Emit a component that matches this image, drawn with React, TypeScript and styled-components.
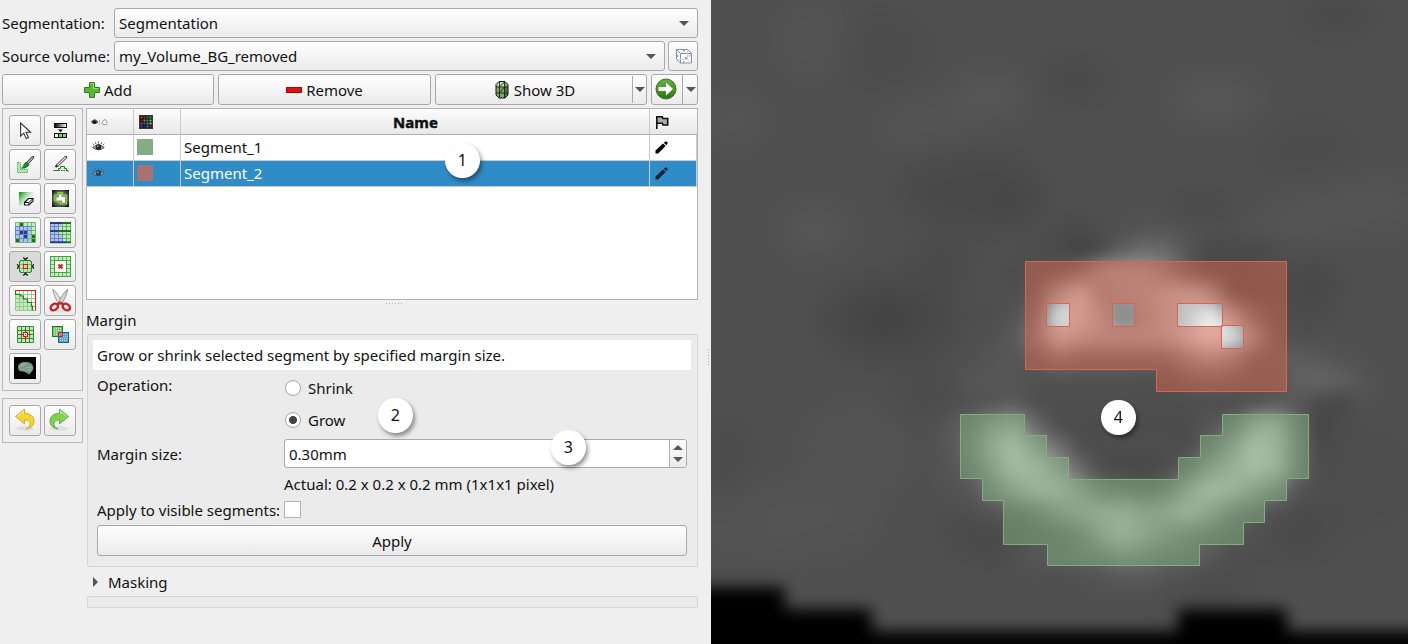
import React from 'react';
import styled, { createGlobalStyle, css } from 'styled-components';

const GlobalStyle = createGlobalStyle`
  * { box-sizing: border-box; }
  body {
    margin: 0;
    background: #efefef;
    color: #111;
    font-family: "Noto Sans", "Open Sans", sans-serif;
    font-size: 15px;
    line-height: 20px;
    overflow: hidden;
  }
`;

const raised = css`
  border: 1px solid #a9a9a9;
  border-radius: 3px;
  background: linear-gradient(#fefefe, #ebebeb);
`;

const Window = styled.div`
  position: relative;
  display: flex;
  width: 1408px;
  height: 644px;
  overflow: hidden;
`;

const Panel = styled.div`
  display: flex;
  flex-direction: column;
  gap: 3px;
  width: 711px;
  flex: none;
  padding: 8px 13px 0 2px;
`;

const FieldRow = styled.div`
  display: flex;
  align-items: center;
  height: 30px;
`;

const FieldLabel = styled.label`
  width: 112px;
  flex: none;
  white-space: nowrap;
  letter-spacing: -0.03px;
`;

const Combo = styled.div`
  ${raised}
  display: flex;
  flex: 1;
  align-items: center;
  justify-content: space-between;
  height: 30px;
  padding: 0 8px 0 4px;
`;

const Arrow = styled.i<{ $up?: boolean }>`
  width: 0;
  height: 0;
  border: 5px solid transparent;
  border-${p => (p.$up ? 'top' : 'bottom')}: 0;
  border-${p => (p.$up ? 'bottom' : 'top')}-color: #555;
`;

const GeometryButton = styled.button`
  ${raised}
  width: 30px;
  height: 30px;
  margin-left: 3px;
  padding: 0;
  display: flex;
`;

const ActionRow = styled.div`
  display: flex;
  gap: 4px;
  height: 31px;
`;

const Button = styled.button<{ $width?: number }>`
  ${raised}
  display: flex;
  align-items: center;
  justify-content: center;
  gap: 4px;
  width: ${p => (p.$width ? `${p.$width}px` : '100%')};
  height: 31px;
  padding: 1px 0 0;
  color: inherit;
  font: inherit;
`;

const SplitButton = styled.div<{ $width: number }>`
  ${raised}
  display: flex;
  width: ${p => p.$width}px;
`;

const SplitMain = styled.div<{ $iconOnly?: boolean }>`
  display: flex;
  flex: 1;
  align-items: center;
  justify-content: center;
  gap: 5px;
  padding: ${p => (p.$iconOnly ? '0 2px 2px 0' : '1px 0 0 2px')};
`;

const SplitDrop = styled.div<{ $joined?: boolean }>`
  display: flex;
  align-items: center;
  justify-content: center;
  width: ${p => (p.$joined ? 15 : 14)}px;
  padding-left: ${p => (p.$joined ? 1 : 0)}px;
  margin: ${p => (p.$joined ? '0' : '1px 0')};
  border-left: 1px solid #a9a9a9;
`;

const Editor = styled.div`
  display: flex;
  gap: 3px;
`;

const Tools = styled.div`
  display: flex;
  flex-direction: column;
  gap: 7px;
  width: 81px;
`;

const ToolBox = styled.div`
  display: grid;
  grid-template-columns: 32px 32px;
  gap: 3px;
  padding: 6px;
  border: 1px solid #b9b9b9;
`;

const ToolButton = styled.button<{ $active?: boolean }>`
  ${raised}
  ${p => p.$active && 'background: #dadada;'}
  width: 32px;
  height: 31px;
  padding: 0;
  display: flex;
`;

const Main = styled.div`
  width: 612px;
  padding: 0;
`;

const Table = styled.div`
  height: 192px;
  border: 1px solid #b5b5b5;
  background: #fff;
`;

const TableRow = styled.div<{ $selected?: boolean; $header?: boolean }>`
  display: grid;
  grid-template-columns: 47px 47px 469px 47px;
  height: 26px;
  color: ${p => (p.$selected ? '#fff' : 'inherit')};
  background: ${p =>
    p.$header ? 'linear-gradient(#fcfcfc, #e8e8e8)' : p.$selected ? '#308cc6' : '#fff'};
  font-weight: ${p => (p.$header ? 700 : 400)};
  ${p => p.$header && '-webkit-text-stroke: 0.4px #000;'}
`;

const Cell = styled.div<{ $center?: boolean; $header?: boolean; $inset?: number }>`
  display: flex;
  align-items: center;
  justify-content: ${p => (p.$center ? 'center' : 'flex-start')};
  padding-left: ${p => p.$inset ?? 3}px;
  padding-top: ${p => (p.$header ? 1 : 0)}px;
  padding-bottom: ${p => (p.$header ? 0 : 1)}px;
  border-right: 1px solid #cacaca;
  border-bottom: 1px solid ${p => (p.$header ? '#b0b0b0' : '#cacaca')};
  ${p => p.$header && '&:last-child { border-right: 0; }'}
`;

const Swatch = styled.span<{ $color: string }>`
  width: 16px;
  height: 16px;
  background: ${p => p.$color};
`;

const Splitter = styled.div`
  display: flex;
  justify-content: center;
  gap: 2px;
  height: 10px;
  padding: 3px 0 0 4px;
`;

const Dot = styled.i`
  width: 1px;
  height: 1px;
  background: #aaa;
`;

const SectionTitle = styled.div`
  height: 24px;
`;

const Group = styled.div`
  margin-left: 1px;
  height: 233px;
  padding: 5px 6px 5px 5px;
  border: 1px solid #d5d5d5;
  border-radius: 2px;
  background: #ebebeb;
`;

const Help = styled.div`
  height: 30px;
  padding: 5px 4px;
  background: #fff;
  letter-spacing: -0.01px;
`;

const Form = styled.div`
  padding: 0 4px;
`;

const FormRow = styled.div<{ $height: number; $top?: boolean; $lift?: number }>`
  display: flex;
  align-items: ${p => (p.$top ? 'flex-start' : 'center')};
  height: ${p => p.$height}px;
  padding-bottom: ${p => p.$lift ?? 0}px;
`;

const FormLabel = styled.label<{ $offset?: number }>`
  width: 187px;
  flex: none;
  padding-top: ${p => p.$offset ?? 0}px;
  white-space: nowrap;
`;

const Radios = styled.div`
  display: flex;
  flex-direction: column;
  gap: 12px;
  padding-top: 8px;
`;

const Option = styled.div`
  display: flex;
  align-items: center;
  gap: 7px;
  height: 20px;
  padding-left: 1px;
`;

const Radio = styled.span<{ $checked?: boolean }>`
  width: 16px;
  height: 16px;
  border: 1px solid #a5a5a5;
  border-radius: 50%;
  background: ${p =>
    p.$checked ? 'radial-gradient(circle, #444 3.6px, #fff 4.4px)' : '#fff'};
`;

const Spin = styled.div`
  display: flex;
  flex: 1;
  height: 29px;
  border: 1px solid #a9a9a9;
  border-radius: 3px;
  background: #fff;
  overflow: hidden;
`;

const SpinValue = styled.span`
  flex: 1;
  padding: 4px;
`;

const SpinSteps = styled.span`
  display: flex;
  flex-direction: column;
  align-items: center;
  justify-content: center;
  gap: 7px;
  width: 17px;
  border-left: 1px solid #b0b0b0;
  background: linear-gradient(#fefefe, #ebebeb);
`;

const CheckBox = styled.span`
  width: 17px;
  height: 17px;
  border: 1px solid #b4b4b4;
  background: #fff;
`;

const ApplyArea = styled.div`
  padding: 7px 4px 0;
`;

const Collapsed = styled.div`
  display: flex;
  align-items: center;
  gap: 10px;
  height: 29px;
  padding: 1px 0 0 7px;
`;

const Chevron = styled.i`
  width: 0;
  height: 0;
  border: 5px solid transparent;
  border-left-color: #555;
  border-right: 0;
`;

const CollapsedBody = styled.div`
  height: 12px;
  margin-left: 1px;
  border: 1px solid #d5d5d5;
  border-radius: 2px;
  background: #ebebeb;
`;

const SideHandle = styled.div`
  position: absolute;
  left: 708px;
  top: 349px;
  display: flex;
  flex-direction: column;
  gap: 2px;
`;

const Callout = styled.div<{ $x: number; $y: number }>`
  position: absolute;
  left: ${p => p.$x - 17}px;
  top: ${p => p.$y - 17}px;
  width: 34.5px;
  height: 34.5px;
  border-radius: 50%;
  background: #fff;
  box-shadow: 2px 3px 4px rgba(0, 0, 0, 0.42);
  font-size: 16px;
  line-height: 34px;
  text-align: center;
`;

const Scan = styled.svg`
  display: block;
  flex: none;
`;

/* ---------- tool icons, drawn on the 32x31 button face ---------- */

const Face = ({ children }: { children: React.ReactNode }) => (
  <svg width="30" height="29" viewBox="1 1 30 29">{children}</svg>
);

const gridPath = (x: number, y: number, n: number, step: number) => {
  let d = '';
  for (let i = 0; i <= n; i++) {
    d += `M${x + i * step} ${y}v${n * step}M${x} ${y + i * step}h${n * step}`;
  }
  return d;
};

const CursorIcon = () => (
  <Face><path d="M11.6 8v13l3.2-2.9 2.4 5.5 2.2-1-2.4-5.3h4.6z" fill="#fff" stroke="#333" strokeWidth="1.1" /></Face>
);

const ThresholdIcon = () => (
  <Face>
    <defs><linearGradient id="ramp"><stop offset="0" stopColor="#000" /><stop offset="1" stopColor="#fff" /></linearGradient></defs>
    <rect x="10.5" y="8.5" width="12" height="4" fill="url(#ramp)" stroke="#111" />
    <path d="M14 14.5h5l-2.5 2.7z" fill="#111" />
    <rect x="10.5" y="18.5" width="12" height="4" fill="#7ccf74" stroke="#111" />
    <path d="M11 19h3v3h-3z" fill="#fff" />
    <path d="M14.5 18.5v4M18.5 18.5v4" stroke="#111" />
  </Face>
);

const PaintIcon = () => (
  <Face>
    <path d="M8.5 13.5h3v7h7v3h-10z" fill="#c9efc4" stroke="#45b045" strokeDasharray="1.5 .7" />
    <path d="M10 14v8h9" fill="none" stroke="#7ccc7a" strokeDasharray="1 1" />
    <path d="M23.8 8.4l-5.8 6.4" stroke="#222" strokeWidth="2.8" strokeLinecap="round" />
    <path d="M23.8 8.4l-5.4 6" stroke="#ddd" strokeWidth="1.2" />
    <path d="M17 13l3 2.5c-1 3-4 3.8-7.5 3.8 2-1.5 2-4.5 4.5-6.3z" fill="#189018" stroke="#0b5b0b" strokeWidth=".5" />
  </Face>
);

const DrawIcon = () => (
  <Face>
    <path d="M9.5 21.5h5v-2h2v-2h4v2h2v2h1.5v1.5" fill="#d8f0d4" stroke="#1d7a1d" />
    <path d="M9.5 21.5h13.5" stroke="#1d7a1d" strokeDasharray="1.5 1" />
    <path d="M21.8 8.2l-9 8.8" stroke="#333" strokeWidth="2.8" strokeLinecap="round" />
    <path d="M21.8 8.2l-9 8.8" stroke="#eee" strokeWidth="1.3" />
    <path d="M12.5 15.5l1.5 1.5-3.5 1.5z" fill="#222" />
  </Face>
);

const EraseIcon = () => (
  <Face>
    <defs><linearGradient id="fade" x2="1" y2=".8"><stop offset=".1" stopColor="#1f9c2c" /><stop offset=".95" stopColor="#fff" stopOpacity="0" /></linearGradient></defs>
    <rect x="10" y="9" width="14" height="13.5" fill="url(#fade)" />
    <path d="M15.5 19.5l4-4h4.5v2.5l-4 4h-4.5z" fill="#fff" stroke="#111" strokeWidth="1.1" />
    <path d="M15.5 19.5h4.5l4-4M20 19.5v2.5" fill="none" stroke="#111" />
  </Face>
);

const TracingIcon = () => (
  <Face>
    <defs><radialGradient id="glow" r=".7"><stop offset=".4" stopColor="#888" /><stop offset="1" stopColor="#000" /></radialGradient></defs>
    <rect x="8" y="7" width="17" height="17" fill="url(#glow)" />
    <path d="M14 9.500h4.500v2.500h4v9h-6v-1.500h-2v-1.500h-4v-6h3.500z" fill="#8a8a8a" stroke="#76e600" strokeWidth="1.200" strokeLinejoin="round" />
    <path d="M15 11.500h2.500v2.500h3.500v5.500h-3v-2h-5.500v-3h2.500z" fill="#fff" />
  </Face>
);

type Rect = [number, number, string];
const CellGrid = ({ cells, line, fill }: { cells: Rect[]; line: string; fill: string }) => (
  <>
    <path d="M6.5 5.5h20v20h-20z" fill={fill} />
    {cells.map(([c, r, color], i) => (
      <rect key={i} x={6.5 + c * 4} y={5.5 + r * 4} width="4" height="4" fill={color} />
    ))}
    <path d={gridPath(6.5, 5.5, 5, 4)} stroke={line} fill="none" />
  </>
);

const GrowSeedsIcon = () => {
  const blue: Rect[] = [[0, 1], [1, 1], [2, 1], [3, 1], [0, 2], [3, 2], [0, 3], [1, 3], [3, 3], [1, 4], [2, 4], [3, 4]].map(
    ([c, r]) => [c, r, '#b3c3ec'] as Rect);
  return (
    <Face>
      <CellGrid line="#6cbd68" fill="#c8eac2" cells={[...blue, [1, 0, '#1c731c'], [4, 3, '#1c731c'], [0, 4, '#1c731c'], [4, 4, '#1c731c'], [1, 2, '#223f80'], [2, 2, '#223f80'], [2, 3, '#223f80']]} />
      <path d="M6.5 9.5h16M6.5 13.5h16M6.5 17.5h12M10.5 21.5h8M10.5 9.5v16M14.5 9.5v16M18.5 9.5v16M6.5 9.5v12" stroke="#6584c8" fill="none" />
    </Face>
  );
};

const FillSlicesIcon = () => (
  <Face>
    <CellGrid line="#5db35a" fill="#c5e8bf" cells={[]} />
    <path d="M6.5 5.5h12v4h-4v8h4v8h-12z" fill="#b3c3ec" />
    <path d="M6.5 9.5h8M6.5 17.5h12M6.5 21.5h12M6.5 5.5v20M10.5 5.5v20M14.5 5.5v20M18.5 17.5v8" stroke="#6584c8" fill="none" />
    <path d="M6 6h12M6 14h8.5M6 25.3h16" stroke="#223f80" strokeWidth="2" />
    <path d="M18 6h9M14.5 14h12.5M22 25.3h5" stroke="#1c731c" strokeWidth="2" />
  </Face>
);

const MarginIcon = () => (
  <Face>
    <path d="M11.5 9.5h10v1h1v10h-1v1h-10v-1h-1v-10h1z" fill="#bfe6b7" stroke="#1c831c" />
    <path d="M14.5 10v11.5M18.5 10v11.5M11 13.5h11M11 17.5h11" stroke="#6cbd68" />
    <rect x="14.5" y="13.5" width="4" height="4" fill="#c5ddb0" stroke="#e11d10" />
    <path d="M14.3 6.500l2.200 2 2.200-2M14.300 24.500l2.200-2 2.200 2M8.300 13.300l1.200 2.200-1.200 2.200M24.700 13.300l-1.200 2.200 1.200 2.200" fill="none" stroke="#111" strokeWidth="1.300" />
  </Face>
);

const HollowIcon = () => (
  <Face>
    <CellGrid line="#5fb95e" fill="#c8eac2" cells={[]} />
    <rect x="10.5" y="9.5" width="12" height="12" fill="#fff" stroke="#3ca53c" />
    <rect x="6.5" y="5.5" width="20" height="20" fill="none" stroke="#3ca53c" />
    <path d="M14.5 13.5l4 4M18.5 13.5l-4 4" stroke="#e11d10" strokeWidth="2" />
  </Face>
);

const SmoothIcon = () => (
  <Face>
    <path d="M6.5 5.5h20v20h-20z" fill="#fff" />
    <path d="M6.5 8h3l4 3 5 4 4 5 .5 5.5h-16.5z" fill="#c5e8bf" />
    <path d={gridPath(6.5, 5.5, 5, 4)} stroke="#8cce8a" fill="none" />
    <path d="M6.5 6v3.500h5v1.500h3v3h4v3.500h4v3.500h1v4.500" stroke="#1c831c" fill="none" strokeWidth="1.2" />
    <path d="M6 5.5h20.5v20" stroke="#e11d10" fill="none" strokeWidth="1.1" />
  </Face>
);

const ScissorsIcon = () => (
  <Face>
    <ellipse cx="16" cy="26" rx="11" ry="1.3" fill="#ddd" />
    <path d="M9 4.2c3.5 3.5 7 8.300 9.500 13.800l-3 1.700c-3-4.700-6.300-9.500-6.500-15.500z" fill="#e2e2e0" stroke="#8e8e8e" strokeWidth=".9" />
    <path d="M23.500 4.200c-3.500 3.500-7 8.300-9.500 13.800l3 1.700c3-4.700 6.300-9.500 6.500-15.500z" fill="#d2d2d0" stroke="#8e8e8e" strokeWidth=".9" />
    <ellipse cx="10.3" cy="22" rx="4" ry="2.9" transform="rotate(-35 10.3 22)" fill="none" stroke="#c82020" strokeWidth="2.4" />
    <ellipse cx="22.3" cy="22" rx="4" ry="2.9" transform="rotate(35 22.3 22)" fill="none" stroke="#c82020" strokeWidth="2.4" />
    <path d="M13 19.500l3.300-2 3.300 2" fill="none" stroke="#c82020" strokeWidth="2.2" />
    <circle cx="16.3" cy="17.3" r=".8" fill="#888" />
  </Face>
);

const IslandsIcon = () => (
  <Face>
    <path d="M8.5 7.5h16v16h-16z" fill="#bfe6b7" />
    <path d={gridPath(8.5, 7.5, 4, 4)} stroke="#2c8f2c" fill="none" />
    <path d="M16.5 10.5v10M11.5 15.5h10" stroke="#f01010" strokeWidth="1.2" />
    <rect x="14.5" y="13.5" width="4" height="4" fill="#fff" stroke="#f01010" />
    <path d="M16 15h1v1h-1z" fill="#f01010" />
  </Face>
);

const LogicalIcon = () => (
  <Face>
    <rect x="8.5" y="7.5" width="10" height="10" fill="#7ac878" stroke="#1f7a1f" />
    <path d="M10 9.5h8M10 11.5h8M10 13.5h8M10 15.5h8" stroke="#c5efbf" strokeDasharray="1 1" />
    <rect x="14.5" y="13.5" width="10" height="10" fill="#58a6c8" stroke="#1d5f86" />
    <path d="M16 19.5h8M16 21.5h8M19 15.5h5M19 17.5h5" stroke="#b5deee" strokeDasharray="1 1" />
    <rect x="14.5" y="13.5" width="4" height="4" fill="#d07a8c" stroke="#9a3148" />
  </Face>
);

const BrainIcon = () => (
  <Face>
    <path d="M5 4h22v22h-22z" fill="#050505" />
    <path d="M9 14.5c0-4 4-5.7 8-5.5 4 0 7.3 2 7.3 6 0 3-2 3.5-3 5.5-.8 1.3-2.5 1-2.8-.5-2-.2-3-1.3-4.5-1.5-3 .3-5-1-5-4z" fill="#789884" />
    <path d="M10.5 14c2-2 3 0 5-1.5M12 11.5c2 .5 4-1.5 6 0M17 15c2-1.5 3.5.5 5.5-1M18 17.5c1.5-1 3 0 4.5-1M13 16.5c1 0 2-1 3 0" stroke="#a2bcaa" fill="none" strokeWidth=".9" />
  </Face>
);

const HistoryIcon = ({ redo }: { redo?: boolean }) => (
  <Face>
    <g transform={redo ? 'translate(31 0) scale(-1 1)' : undefined}>
      <ellipse cx="16" cy="23.5" rx="9" ry="2.2" fill="#ddd" />
      <path
        d="M6.5 11.5L15.5 4v4.3c6 0 9.5 3.2 9.5 8 0 4-3 6.8-8 7.7 3-1.7 4.2-3.6 4-5.6-.3-2.2-2.3-3.4-5.5-3.4v4z"
        fill={redo ? '#7fd348' : '#f5d331'} stroke={redo ? '#4f9f3a' : '#c5a012'} strokeWidth=".8" />
      <path d="M8.5 11.3l6-5v3" stroke="#fff" strokeOpacity=".6" fill="none" />
    </g>
  </Face>
);

const AddIcon = () => (
  <svg width="16" height="16" viewBox="0 0 16 16">
    <path d="M5.5.5h5v5h5v5h-5v5h-5v-5h-5v-5h5z" fill="#55b832" stroke="#2f7d1c" />
    <path d="M6.5 1.5h3v5h5" fill="none" stroke="#98dc7c" />
  </svg>
);

const RemoveIcon = () => (
  <svg width="16" height="16" viewBox="0 0 16 16">
    <rect x=".5" y="5.5" width="15" height="5" fill="#e01010" stroke="#a00808" />
  </svg>
);

const SurfaceIcon = () => (
  <svg width="14" height="18" viewBox="0 0 14 18">
    <path d="M4 .5h6l3 3v10.5l-3 3h-6l-3-3v-10.5z" fill="#7ba862" />
    <path d="M4 .5h6l-1 5.5h-5l-3-2z" fill="#b7e2a0" />
    <path d="M9.5 6h3.5v8l-3 3h-.5z" fill="#4d7440" />
    <path d="M4 .5h6l3 3v10.5l-3 3h-6l-3-3v-10.5z" fill="none" stroke="#1b1b1b" />
    <path d="M1 6h12M1 12h12M4.5 1v16M9.5 1v16M4.5 6l5-5M4.5 12l5-6" fill="none" stroke="#222" strokeWidth=".9" />
  </svg>
);

const NextIcon = () => (
  <svg width="22" height="22" viewBox="0 0 22 22">
    <defs><linearGradient id="ball" x2="0" y2="1"><stop offset="0" stopColor="#6ab23f" /><stop offset="1" stopColor="#2d7412" /></linearGradient></defs>
    <circle cx="11" cy="11" r="10" fill="url(#ball)" stroke="#39761f" />
    <path d="M3.5 9h7.5V4.5l7 6.5-7 6.5v-4.500H3.5z" fill="#fff" />
  </svg>
);

const GeometryIcon = () => (
  <svg width="28" height="28" viewBox="669 42 28 28">
    <path d="M676.5 49.500h11l4 4v9.500h-11l-4-3.500zM676.5 49.500l4 4h11M680.5 53.500v9.500" fill="#fff" stroke="#6f92c8" />
    <path d="M687.5 49.500v10h-11M687.5 59.500l4 3.500" fill="none" stroke="#c8d4ea" />
    <path d="M683 50h2v1.500h-2zM677 55h1.500v2h-1.500zM685 57h2v2h-2zM689 55h1.500v1.500h-1.500zM683 61h1.500v1.500h-1.500z" fill="#ee8a7c" />
  </svg>
);

const EyeIcon = ({ faded }: { faded?: boolean }) => (
  <svg width="13" height="12" viewBox="0 0 13 12" opacity={faded ? 0.7 : 1}>
    <path d="M.8 6.5q5.7-5.5 11.4 0q-5.7 4.5-11.4 0z" fill="#bbb" stroke="#444" />
    <circle cx="6.5" cy="6" r="2.8" fill="#222" />
    <path d="M2 4L.8 2.6M4 3L3.3 1.2M6.5 2.500V.5M9 3l.8-1.8M11 4l1.200-1.400" stroke="#555" strokeWidth="1" />
    <circle cx="5.8" cy="5.2" r=".7" fill="#fff" />
  </svg>
);

const VisibilityHeaderIcon = () => (
  <svg width="17" height="8" viewBox="0 0 17 8">
    <path d="M.3 4q3.100-4.500 6.600 0q-3.300 3.500-6.600 0z" fill="#555" stroke="#444" strokeWidth=".9" />
    <circle cx="3.5" cy="4" r="1.6" fill="#111" />
    <path d="M8.500 2v5" stroke="#bbb" />
    <path d="M11.5 6.500q-1.500-1.500.2-2.800.5-2.200 2.300-2 1.800.2 1.700 2.200 1 1.500 0 2.600z" fill="#fff" stroke="#999" />
  </svg>
);

const ColorHeaderIcon = () => {
  const colors = ['#e22', '#832', '#283', '#3a4', '#622', '#b83', '#487', '#6c6', '#a3a', '#64a', '#49b', '#8cc', '#737', '#22c', '#2a3', '#a22'];
  return (
    <svg width="14" height="14" viewBox="0 0 14 14">
      <rect x=".5" y=".5" width="13" height="13" fill="#111" stroke="#433" />
      {colors.map((c, i) => (
        <rect key={i} x={1.5 + (i % 4) * 3} y={1.5 + Math.floor(i / 4) * 3} width="2" height="2" fill={c} />
      ))}
    </svg>
  );
};

const FlagIcon = () => (
  <svg width="14" height="15" viewBox="0 0 14 15">
    <path d="M1.8 14V1.8h5.5l.6 1.7h4.8v6.5h-4.7l-.6-1.7h-5.6" fill="#aaa" stroke="#111" strokeWidth="1.6" />
  </svg>
);

const PencilIcon = ({ faded }: { faded?: boolean }) => (
  <svg width="13" height="13" viewBox="0 0 13 13" opacity={faded ? 0.75 : 1}>
    <path d="M.5 12.5v-3L8 2.5l2.6 2.6-7.5 7.4zM8.8 1.8L10.5.4h1l1.1 1.2v.8l-1.3 1.9z" fill="#000" />
  </svg>
);

/* ---------- slice view ---------- */

const VOXEL = 21.78;
const ORIGIN_X = 698.5;

/* Grey levels by voxel row: first column, then one hex pair per voxel. */
const voxels: Record<number, [number, string]> = {
  10: [16, '4c4a4e5054545250'],
  11: [15, '4c4a4048606c6854484a484c'],
  12: [14, '4c5054689aa09c8058484648'],
  13: [14, '4e58a0d08c9ca4b4c4a44a484a4a'],
  14: [13, '4e5268e0d4a88498b4c8f0b4664e4c'],
  15: [13, '505a78c8b4a8a8a8b0d0f4e498544e'],
  16: [13, '565658706464646468889e865a585e58'],
  17: [12, '56565450505050504e4e585e5a5654606660'],
  18: [12, '50545a4e4e4e4e4e4e4e4e4e4c5058584a46'],
  19: [11, '56648a98684c4c4c4c4c4c4c5660a0ac6044'],
  20: [11, '566ca8cc90704e4c4e4e4e4c6092d0bc684a'],
  21: [11, '546090c8bc94684c48484c5c90b0d0b8684c'],
  22: [11, '52567098b8b8906a6058689cc8bc9472544e'],
  23: [12, '5054586688a0a8ac98a0bc986c5a50'],
  24: [12, '4a4a4e545a689cb89c826e625650'],
  25: [13, '4a50585c64687c706460584e4e'],
  26: [16, '4e5054585a5450'],
};

const voxelRects = Object.entries(voxels).flatMap(([row, [first, hex]]) =>
  (hex.match(/../g) ?? []).map((level, i) => ({
    x: ORIGIN_X + (first + i) * VOXEL,
    y: Number(row) * VOXEL,
    fill: `#${level}${level}${level}`,
  })),
);

/* Slow tissue variation: cx, cy, rx, ry, grey, opacity. */
const clouds: [number, number, number, number, string, number][] = [
  [890, 320, 70, 40, '#404040', 0.5],
  [885, 318, 20, 18, '#383838', 0.45],
  [970, 190, 70, 40, '#444', 0.6],
  [1015, 205, 30, 18, '#404040', 0.4],
  [940, 265, 30, 25, '#444', 0.5],
  [1080, 248, 22, 14, '#363636', 0.7],
  [1200, 225, 28, 30, '#424242', 0.6],
  [1308, 285, 25, 35, '#404040', 0.6],
  [815, 230, 34, 24, '#5c5c5c', 0.6],
  [992, 95, 34, 20, '#5e5e5e', 0.6],
  [1215, 100, 45, 20, '#5b5b5b', 0.7],
  [930, 125, 50, 30, '#575757', 0.5],
  [1075, 80, 40, 22, '#464646', 0.6],
  [880, 50, 50, 40, '#494949', 0.6],
  [815, 40, 36, 40, '#575757', 0.6],
  [1335, 15, 40, 18, '#444', 0.6],
  [1310, 160, 50, 40, '#4a4a4a', 0.6],
  [1345, 205, 80, 30, '#5a5a5a', 0.5],
  [1270, 245, 60, 20, '#5a5a5a', 0.5],
  [735, 120, 25, 26, '#5a5a5a', 0.6],
  [725, 470, 28, 50, '#474747', 0.6],
  [780, 520, 100, 40, '#585858', 0.5],
  [860, 450, 60, 50, '#555', 0.5],
  [925, 395, 30, 30, '#484848', 0.5],
  [980, 530, 34, 22, '#444', 0.7],
  [1300, 530, 34, 30, '#464646', 0.6],
  [1315, 422, 24, 14, '#3f3f3f', 0.7],
  [1325, 385, 44, 18, '#646464', 0.6],
  [1360, 480, 50, 50, '#4a4a4a', 0.5],
  [1205, 590, 50, 12, '#424242', 0.5],
];

const SliceView = () => (
  <Scan width="697" height="644" viewBox="711 0 697 644">
    <defs>
      <filter id="interp" filterUnits="userSpaceOnUse" x="660" y="-50" width="800" height="750" colorInterpolationFilters="sRGB">
        <feGaussianBlur stdDeviation="9" />
      </filter>
      <filter id="edge" filterUnits="userSpaceOnUse" x="600" y="500" width="900" height="300" colorInterpolationFilters="sRGB">
        <feGaussianBlur stdDeviation="7.5" />
      </filter>
      <filter id="soft" filterUnits="userSpaceOnUse" x="640" y="-80" width="840" height="800" colorInterpolationFilters="sRGB">
        <feGaussianBlur stdDeviation="14" />
      </filter>
    </defs>
    <g filter="url(#interp)">
      <rect x="660" y="-50" width="800" height="750" fill="#505050" />
      <g filter="url(#soft)">
        {clouds.map(([cx, cy, rx, ry, fill, opacity], i) => (
          <ellipse key={i} cx={cx} cy={cy} rx={rx} ry={ry} fill={fill} opacity={opacity} />
        ))}
      </g>
      <g shapeRendering="crispEdges">
        {voxelRects.map((v, i) => (
          <rect key={i} x={v.x} y={v.y} width={VOXEL} height={VOXEL} fill={v.fill} />
        ))}
      </g>
    </g>
    <path d="M640 587H785V609H872V631H1178V609H1287V631H1480V740H640z" fill="#000" filter="url(#edge)" />
    <path
      d="M1025.5 261.5H1286.5V391.5H1156.5V369.5H1025.5zM1046.5 303.5V326.5H1069.5V303.5zM1112.5 303.5V326.5H1134.5V303.5zM1177.5 303.5V326.5H1222.5V303.5zM1221.5 325.5V348.5H1243.5V325.5z"
      fill="#d8654f" fillOpacity=".5" fillRule="evenodd" stroke="#d8654f" />
    <path
      d="M960.5 414.5H1024.5V435.5H1046.5V457.5H1068.5V479.5H1178.5V457.5H1200.5V435.5H1222.5V414.5H1308.5V478.5H1286.5V500.5H1264.5V522.5H1243.5V544.5H1199.5V565.5H1047.5V544.5H1003.5V500.5H982.5V478.5H960.5z"
      fill="#80ae80" fillOpacity=".5" stroke="#80ae80" />
  </Scan>
);

const tools = [
  CursorIcon, ThresholdIcon, PaintIcon, DrawIcon, EraseIcon, TracingIcon, GrowSeedsIcon, FillSlicesIcon,
  MarginIcon, HollowIcon, SmoothIcon, ScissorsIcon, IslandsIcon, LogicalIcon, BrainIcon,
];

const segments = [
  { name: 'Segment_1', color: '#80ae80', selected: false },
  { name: 'Segment_2', color: '#a87272', selected: true },
];

const dots = Array.from({ length: 6 }, (_, i) => <Dot key={i} />);

export default function App() {
  return (
    <>
      <GlobalStyle />
      <Window>
        <Panel>
          <FieldRow>
            <FieldLabel>Segmentation:</FieldLabel>
            <Combo>Segmentation<Arrow /></Combo>
          </FieldRow>
          <FieldRow>
            <FieldLabel>Source volume:</FieldLabel>
            <Combo>my_Volume_BG_removed<Arrow /></Combo>
            <GeometryButton><GeometryIcon /></GeometryButton>
          </FieldRow>
          <ActionRow>
            <Button $width={212}><AddIcon />Add</Button>
            <Button $width={213}><RemoveIcon />Remove</Button>
            <SplitButton $width={212}>
              <SplitMain><SurfaceIcon />Show 3D</SplitMain>
              <SplitDrop><Arrow /></SplitDrop>
            </SplitButton>
            <SplitButton $width={47}>
              <SplitMain $iconOnly><NextIcon /></SplitMain>
              <SplitDrop $joined><Arrow /></SplitDrop>
            </SplitButton>
          </ActionRow>
          <Editor>
            <Tools>
              <ToolBox>
                {tools.map((Icon, i) => (
                  <ToolButton key={i} $active={Icon === MarginIcon}><Icon /></ToolButton>
                ))}
              </ToolBox>
              <ToolBox>
                <ToolButton><HistoryIcon /></ToolButton>
                <ToolButton><HistoryIcon redo /></ToolButton>
              </ToolBox>
            </Tools>
            <Main>
              <Table>
                <TableRow $header>
                  <Cell $header $inset={4}><VisibilityHeaderIcon /></Cell>
                  <Cell $header $inset={5}><ColorHeaderIcon /></Cell>
                  <Cell $header $center $inset={1}>Name</Cell>
                  <Cell $header $inset={5}><FlagIcon /></Cell>
                </TableRow>
                {segments.map(s => (
                  <TableRow key={s.name} $selected={s.selected}>
                    <Cell $inset={5}><EyeIcon faded={s.selected} /></Cell>
                    <Cell><Swatch $color={s.color} /></Cell>
                    <Cell>{s.name}</Cell>
                    <Cell $inset={5}><PencilIcon faded={s.selected} /></Cell>
                  </TableRow>
                ))}
              </Table>
              <Splitter>{dots}</Splitter>
              <SectionTitle>Margin</SectionTitle>
              <Group>
                <Help>Grow or shrink selected segment by specified margin size.</Help>
                <Form>
                  <FormRow $height={69} $top>
                    <FormLabel $offset={5}>Operation:</FormLabel>
                    <Radios>
                      <Option><Radio />Shrink</Option>
                      <Option><Radio $checked />Grow</Option>
                    </Radios>
                  </FormRow>
                  <FormRow $height={29}>
                    <FormLabel>Margin size:</FormLabel>
                    <Spin>
                      <SpinValue>0.30mm</SpinValue>
                      <SpinSteps><Arrow $up /><Arrow /></SpinSteps>
                    </Spin>
                  </FormRow>
                  <FormRow $height={33} $lift={1}>
                    <FormLabel />
                    Actual: 0.2 x 0.2 x 0.2 mm (1x1x1 pixel)
                  </FormRow>
                  <FormRow $height={17}>
                    <FormLabel>Apply to visible segments:</FormLabel>
                    <CheckBox />
                  </FormRow>
                </Form>
                <ApplyArea><Button>Apply</Button></ApplyArea>
              </Group>
              <Collapsed><Chevron />Masking</Collapsed>
              <CollapsedBody />
            </Main>
          </Editor>
        </Panel>
        <SliceView />
        <SideHandle>{dots}</SideHandle>
        <Callout $x={462} $y={160}>1</Callout>
        <Callout $x={395} $y={415}>2</Callout>
        <Callout $x={568} $y={447}>3</Callout>
        <Callout $x={1118} $y={417}>4</Callout>
      </Window>
    </>
  );
}
